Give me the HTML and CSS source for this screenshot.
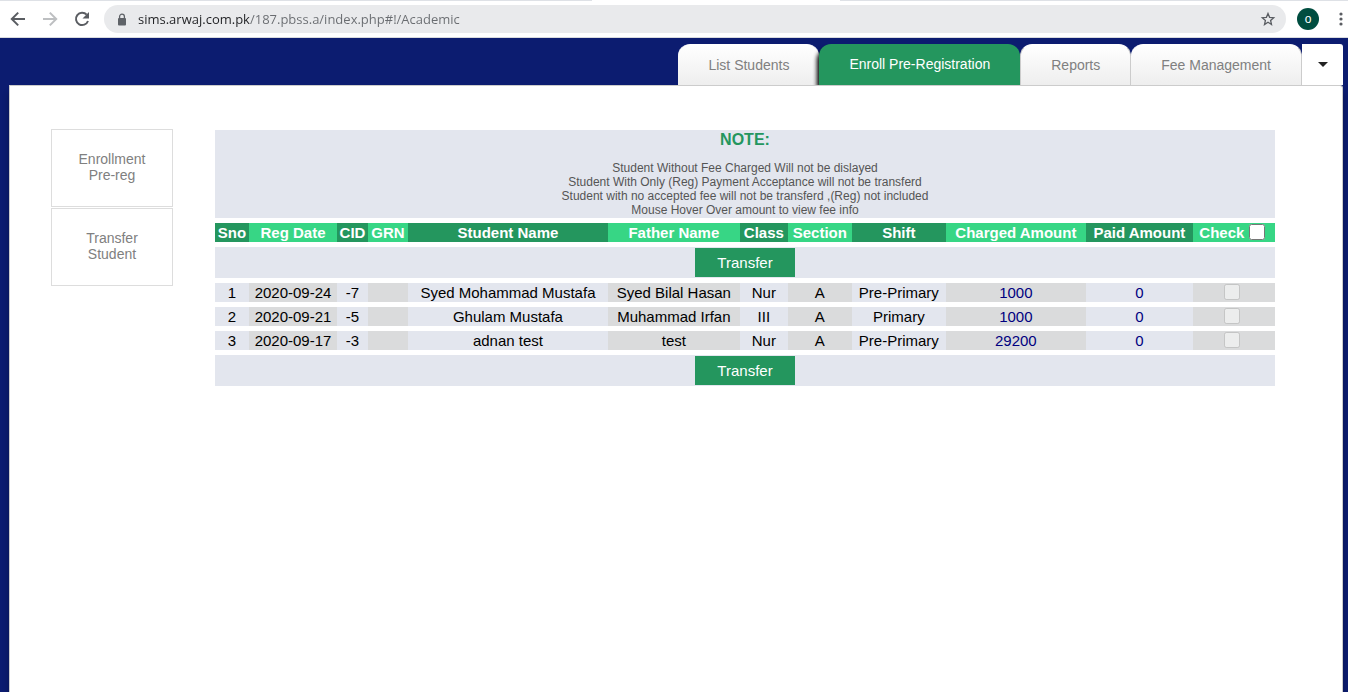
FILE: index.html
```html
<!DOCTYPE html>
<html lang="en">
<head>
<meta charset="utf-8">
<title>Enroll Pre-Registration</title>
<link rel="stylesheet" href="styles.css">
</head>
<body>
<div class="browser-bar">
  <div class="tab-strip"><span class="open-tab"></span></div>
  <div class="toolbar">
    <div class="nav-buttons">
      <button class="icon-button" type="button" aria-label="Back"><svg width="16" height="16" viewBox="0 0 16 16" fill="none" stroke="#5a5d62" stroke-width="2"><path d="M15 8H2M8.2 1.6 1.8 8l6.4 6.4"/></svg></button>
      <button class="icon-button" type="button" aria-label="Forward"><svg width="16" height="16" viewBox="0 0 16 16" fill="none" stroke="#bdbfc1" stroke-width="2"><path d="M1 8h13M7.8 1.6 14.2 8l-6.4 6.4"/></svg></button>
      <button class="icon-button" type="button" aria-label="Reload"><svg width="16" height="16" viewBox="0 0 16 16"><path d="M12.7 3.6A6.2 6.2 0 1 0 14 10" fill="none" stroke="#5a5d62" stroke-width="2"/><path d="M15 1v6.5H8.500z" fill="#5a5d62"/></svg></button>
    </div>
    <div class="address-bar">
      <svg width="10" height="13" viewBox="0 0 10 13"><rect x="1" y="5" width="8" height="7.500" rx="1" fill="#5f6368"/><path d="M2.600 5.500V3.600a2.400 2.400 0 0 1 4.800 0v1.900" fill="none" stroke="#5f6368" stroke-width="1.300"/></svg>
      <input class="address" type="text" aria-label="Address" value="sims.arwaj.com.pk/187.pbss.a/index.php#!/Academic">
      <button class="icon-button" type="button" aria-label="Bookmark"><svg width="16" height="16" viewBox="0 0 16 16"><path d="m8 2.400 1.600 3.900 4.100.4-3.100 2.700.9 4.100L8 11.300l-3.500 2.200.9-4.100-3.100-2.700 4.100-.4z" fill="none" stroke="#5a5d62" stroke-width="1.300"/></svg></button>
    </div>
    <button class="avatar" type="button">o</button>
    <button class="icon-button" type="button" aria-label="Menu"><svg width="4" height="14" viewBox="0 0 4 14" fill="#5a5d62"><circle cx="2" cy="2" r="1.600"/><circle cx="2" cy="7" r="1.600"/><circle cx="2" cy="12" r="1.600"/></svg></button>
  </div>
</div>

<div class="site">
  <nav class="tabs">
    <a class="tab" href="#list">List Students</a>
    <a class="tab tab-active" href="#enroll">Enroll Pre-Registration</a>
    <a class="tab" href="#reports">Reports</a>
    <a class="tab" href="#fees">Fee Management</a>
    <button class="more" type="button" aria-label="More"><svg width="10" height="5" viewBox="0 0 10 5"><path d="M0 0h10L5 5z" fill="#222"/></svg></button>
  </nav>
  <main class="panel">
    <nav class="side">
      <a class="side-link" href="#pre-reg">Enrollment<br>Pre-reg</a>
      <a class="side-link" href="#transfer">Transfer<br>Student</a>
    </nav>
    <table class="students">
      <colgroup>
        <col class="c-sno"><col class="c-date"><col class="c-cid"><col class="c-grn"><col class="c-student"><col class="c-father"><col class="c-class"><col class="c-section"><col class="c-shift"><col class="c-charged"><col class="c-paid"><col class="c-check">
      </colgroup>
      <thead>
        <tr><td class="note" colspan="12">
          <h1 class="note-title">NOTE:</h1>
          Student Without Fee Charged Will not be dislayed<br>
          Student With Only (Reg) Payment Acceptance will not be transferd<br>
          Student with no accepted fee will not be transferd ,(Reg) not included<br>
          Mouse Hover Over amount to view fee info
        </td></tr>
        <tr><th>Sno</th><th>Reg Date</th><th>CID</th><th>GRN</th><th>Student Name</th><th>Father Name</th><th>Class</th><th>Section</th><th>Shift</th><th>Charged Amount</th><th>Paid Amount</th><th><label>Check <input class="tick" type="checkbox"></label></th></tr>
      </thead>
      <tbody>
        <tr><td class="action" colspan="12"><button class="transfer" type="button">Transfer</button></td></tr>
        <tr><td>1</td><td>2020-09-24</td><td>-7</td><td></td><td>Syed Mohammad Mustafa</td><td>Syed Bilal Hasan</td><td>Nur</td><td>A</td><td>Pre-Primary</td><td class="amount">1000</td><td class="amount">0</td><td><input class="tick" type="checkbox" aria-label="Select row 1" disabled></td></tr>
        <tr><td>2</td><td>2020-09-21</td><td>-5</td><td></td><td>Ghulam Mustafa</td><td>Muhammad Irfan</td><td>III</td><td>A</td><td>Primary</td><td class="amount">1000</td><td class="amount">0</td><td><input class="tick" type="checkbox" aria-label="Select row 2" disabled></td></tr>
        <tr><td>3</td><td>2020-09-17</td><td>-3</td><td></td><td>adnan test</td><td>test</td><td>Nur</td><td>A</td><td>Pre-Primary</td><td class="amount">29200</td><td class="amount">0</td><td><input class="tick" type="checkbox" aria-label="Select row 3" disabled></td></tr>
        <tr><td class="action" colspan="12"><button class="transfer" type="button">Transfer</button></td></tr>
      </tbody>
    </table>
  </main>
</div>
</body>
</html>
```
FILE: styles.css
```css
* { box-sizing: border-box; }

body {
  margin: 0;
  min-height: 100vh;
  display: flex;
  flex-direction: column;
  background: #0c1c70;
  font-family: "Liberation Sans", Arial, sans-serif;
  font-size: 14px;
  line-height: 16px;
}

button { font-family: inherit; border: 0; padding: 0; }
a { text-decoration: none; }
svg { display: block; flex: none; }

/* Browser chrome */
.browser-bar { background: #fff; border-bottom: 1px solid #d9dbde; }
.tab-strip { display: flex; height: 1px; padding-left: 592px; background: #dee1e6; }
.open-tab { width: 248px; background: #fff; }
.toolbar { display: flex; align-items: center; padding: 4px 5px 4px 10px; }
.nav-buttons { display: flex; gap: 16px; margin-right: 14px; }
.icon-button { background: none; }

.address-bar {
  flex: 1;
  display: flex;
  align-items: center;
  height: 28px;
  padding: 0 10px 0 13px;
  border-radius: 14px;
  background: #e9eaec;
}
.address {
  flex: 1;
  min-width: 0;
  margin-left: 11px;
  padding: 0;
  border: 0;
  outline: 0;
  font: 13px/20px "Open Sans", "Noto Sans", sans-serif;
  color: #202124;
  background: linear-gradient(to right, #202124 112px, #696c70 112px);
  background-clip: text;
  -webkit-background-clip: text;
  -webkit-text-fill-color: transparent;
}
.avatar {
  width: 22px;
  height: 22px;
  margin: 0 20px 0 11px;
  border-radius: 50%;
  background: #004d40;
  color: #fff;
  font-size: 12px;
  line-height: 20px;
}

/* Site header tabs */
.site { flex: 1; display: flex; flex-direction: column; padding: 6px 5px 0 9px; }
.tabs { display: flex; justify-content: flex-end; }
.tab {
  padding: 12px 30px;
  border: 1px solid #ccc;
  border-top-color: #fff;
  border-width: 1px 1px 0 0;
  border-radius: 12px 12px 0 0;
  background: linear-gradient(#fff, #eee);
  color: #808080;
}
.tab:first-child { border-right: 0; }
.tab-active {
  position: relative;
  padding-bottom: 13px;
  border: 0;
  background: #24965e;
  color: #fff;
  box-shadow: -3px 4px 4px -1px #000;
}
.tab-active + .tab { position: relative; border-left-width: 1px; }
.more {
  display: flex;
  align-items: center;
  justify-content: center;
  width: 41px;
  border-radius: 0 3px 0 0;
  background: #fff;
}

/* Content */
.panel {
  position: relative;
  flex: 1;
  display: flex;
  align-items: flex-start;
  gap: 42px;
  padding: 39px 67px 0 41px;
  border: 1px solid #ccc;
  border-bottom: 0;
  border-top-right-radius: 3px;
  background: #fff;
  box-shadow: 0 8px 6px rgba(0, 0, 0, 0.3);
}
.side { flex: none; display: flex; flex-direction: column; gap: 1px; width: 122px; padding-top: 4px; }
.side-link {
  padding: 21px 0 23px;
  border: 1px solid #ddd;
  color: #808080;
  text-align: center;
}

.students {
  flex: 1;
  width: 100%;
  table-layout: fixed;
  border-spacing: 0 5px;
  font-size: 15px;
  line-height: 17px;
  text-align: center;
  color: #000;
}
.c-sno { width: 34px; }
.c-date { width: 88px; }
.c-cid { width: 31px; }
.c-grn { width: 40px; }
.c-father { width: 132px; }
.c-class { width: 48px; }
.c-section { width: 64px; }
.c-shift { width: 94px; }
.c-charged { width: 140px; }
.c-paid { width: 107px; }
.c-check { width: 82px; }

.students th, .students td { padding: 1px 0; background: #e3e6ee; white-space: nowrap; }
.students td:nth-child(even) { background: #dadbdc; }
.students th { background: #24965e; color: #fff; }
.students th:nth-child(even) { background: #37d685; }
.students .note { font-size: 12px; line-height: 14px; color: #555; }
.note-title { margin: 0 0 12px; font-size: 16px; line-height: 18px; color: #24965e; }
.students .amount { color: #000080; }

.transfer {
  display: block;
  width: 100px;
  margin: 0 auto;
  padding: 6px 0;
  background: #24965e;
  color: #fff;
  font-size: 15px;
  line-height: 17px;
}
.tick { width: 16px; height: 16px; margin: 0 4px 0 0; vertical-align: top; }
```
